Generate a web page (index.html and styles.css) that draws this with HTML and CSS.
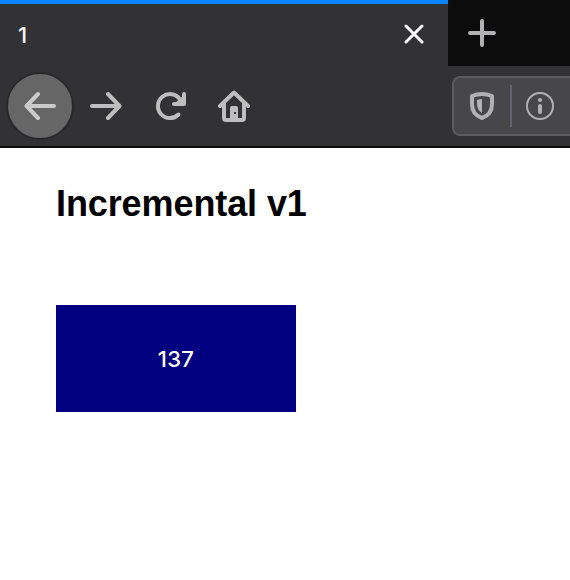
FILE: index.html
```html
<!DOCTYPE html>
<html lang="en">
<head>
<meta charset="utf-8">
<title>1</title>
<link rel="stylesheet" href="styles.css">
</head>
<body>
<header class="chrome">
  <div class="tabs">
    <div class="tab">
      <span class="tab-title">1</span>
      <svg class="close" width="20" height="20" viewBox="0 0 20 20"><path d="M2 2L18 18M18 2L2 18"/></svg>
    </div>
    <svg class="plus" width="28" height="28" viewBox="0 0 28 28"><path d="M14 2V26M2 14H26"/></svg>
  </div>
  <div class="toolbar">
    <nav class="nav">
      <span class="button back"><svg class="icon" width="32" height="32" viewBox="0 0 32 32"><path d="M30 16H3M14 4L2.500 16L14 28"/></svg></span>
      <span class="button"><svg class="icon" width="32" height="32" viewBox="0 0 32 32"><path d="M2 16H29M18 4L29.500 16L18 28"/></svg></span>
      <span class="button"><svg class="icon" width="32" height="32" viewBox="0 0 32 32"><path d="M24.500 24.500A12 12 0 1 1 26 9.500L28 12"/><path d="M30 4V14H20"/><path class="fill" d="M20 14L30 5V14Z"/></svg></span>
      <span class="button"><svg class="icon" width="32" height="32" viewBox="0 0 32 32"><path d="M2 16L16 2.500L30 16M6 14V28Q6 30 8 30H24Q26 30 26 28V14"/><path class="fill" fill-rule="evenodd" d="M12 30V18Q12 16 14 16H18Q20 16 20 18V30ZM16 22V24H18V22Z"/></svg></span>
    </nav>
    <div class="urlbar">
      <svg class="icon shield" width="24" height="28" viewBox="0 0 24 28"><path d="M12 2Q17 2 22 4V12C22 19.500 18 24 12 26C6 24 2 19.500 2 12V4Q7 2 12 2Z"/><path class="fill" d="M12 7V21C8.500 19 7 16 7 12V8Q9.500 7 12 7Z"/></svg>
      <span class="divider"></span>
      <svg class="icon info" width="28" height="28" viewBox="0 0 28 28"><circle cx="14" cy="14" r="13"/><circle class="fill" cx="14" cy="8" r="2.100"/><path class="stem" d="M14 14V20"/></svg>
    </div>
  </div>
</header>
<main>
  <h1>Incremental v1</h1>
  <div class="counter">137</div>
</main>
</body>
</html>
```
FILE: styles.css
```css
* { box-sizing: border-box; }
body { margin: 0; background: #fff; overflow: hidden; }
.chrome { height: 148px; background: #323234; border-bottom: 2px solid #0c0c0d; }
.tabs { height: 66px; display: flex; background: #0c0c0d; }
.tab {
  width: 448px; height: 66px; padding: 0 24px 2px 18px;
  display: flex; align-items: center; justify-content: space-between;
  background: #323234; border-top: 4px solid #0a84ff;
}
.tab-title { color: #f9f9fa; font: 500 22px/28px Inter, sans-serif; padding-top: 2px; }
svg { display: block; fill: none; stroke-linecap: round; stroke-linejoin: round; flex: none; }
.close { stroke: #fff; stroke-width: 3; }
.plus { margin: 19px 0 0 20px; stroke: #b1b1b3; stroke-width: 4; }
.toolbar { height: 80px; display: flex; align-items: center; justify-content: space-between; }
.nav { display: flex; padding-left: 6px; }
.button { width: 64px; height: 68px; display: flex; align-items: center; justify-content: center; }
.back { width: 68px; border: 2px solid #28282a; border-radius: 50%; background: #666; }
.icon { stroke: #bebebe; stroke-width: 4; }
.back .icon { stroke: #cbcbcb; }
.fill { fill: #bebebe; stroke: none; }
.urlbar {
  width: 118px; height: 60px; padding-left: 16px; display: flex; align-items: center;
  background: #474749; border: 2px solid #5b5b5d; border-right: 0; border-radius: 8px 0 0 8px;
}
.urlbar .icon { stroke: #b1b1b3; }
.urlbar .fill { fill: #b1b1b3; }
.divider { width: 2px; height: 42px; margin: 0 14px 0 16px; background: #62636f; }
.urlbar .info { stroke-width: 2; }
.urlbar .stem { stroke-width: 4; }
main { padding: 35px 56px; }
h1 { margin: 0; font: bold 36px/42px "Liberation Sans", Arial, sans-serif; letter-spacing: -0.1px; white-space: nowrap; }
.counter {
  width: 240px; height: 107px; margin-top: 80px; display: flex; align-items: center; justify-content: center;
  background: #000080; color: #fff; font: 500 22px/28px Inter, sans-serif; letter-spacing: 0.4px;
}
```
